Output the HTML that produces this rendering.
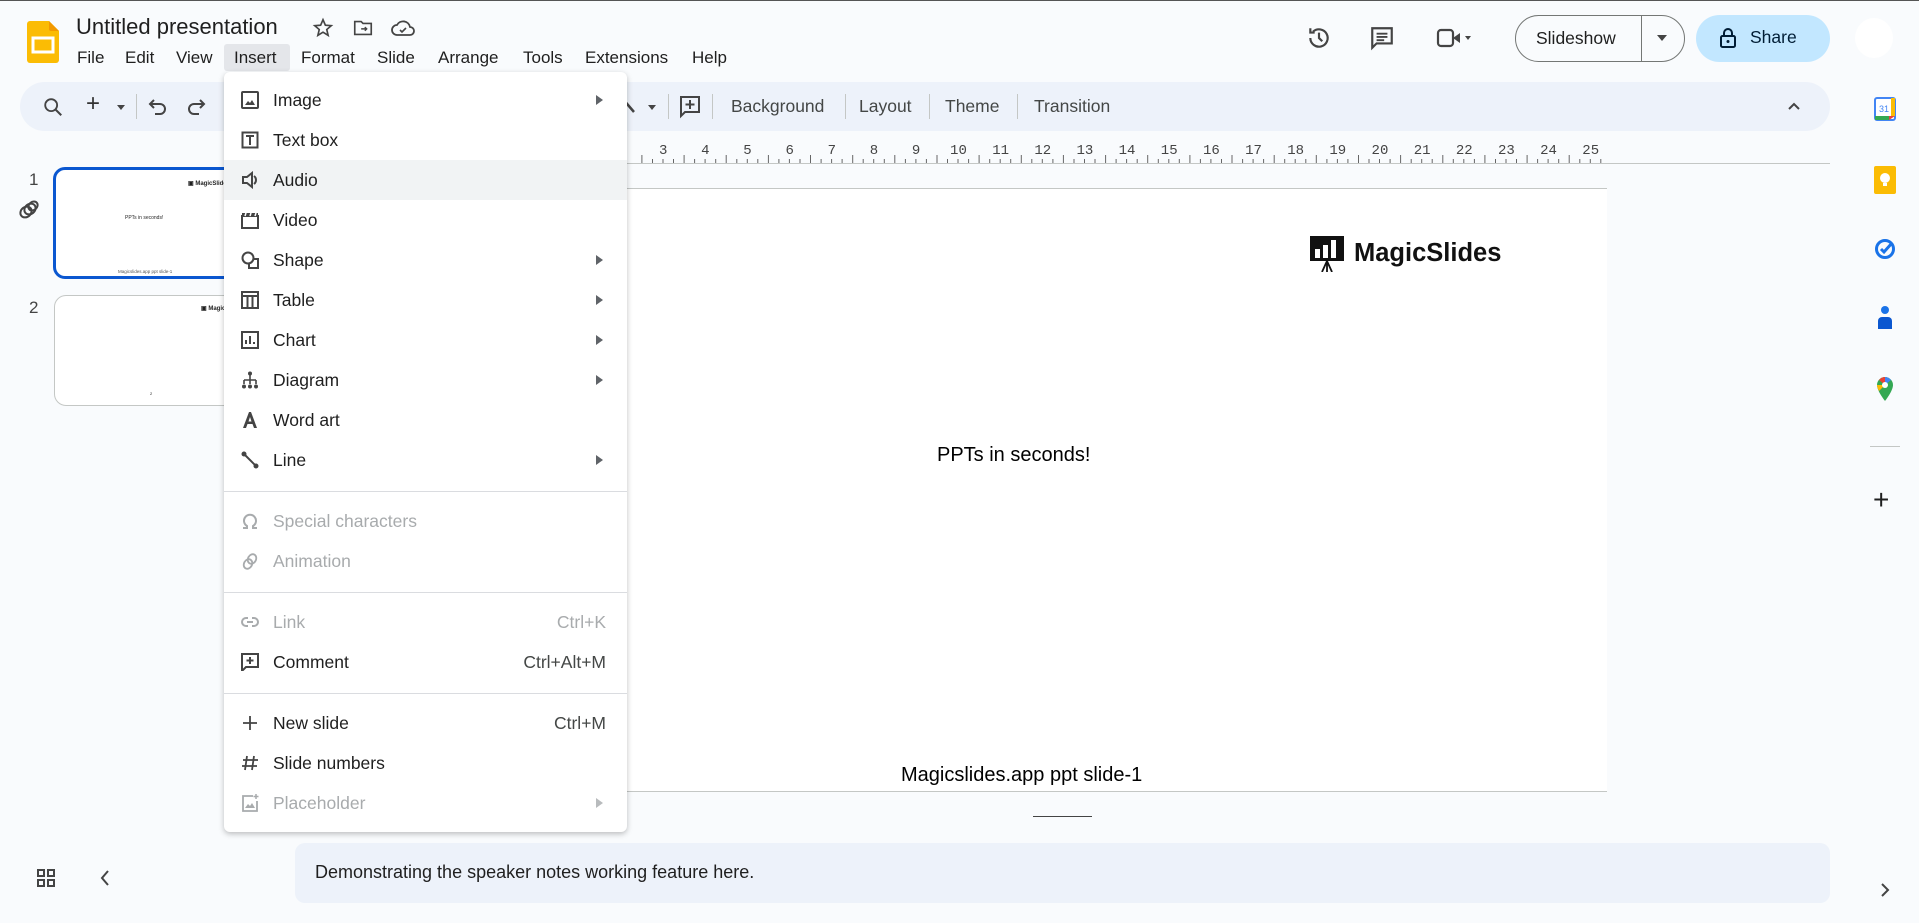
<!DOCTYPE html>
<html><head><meta charset="utf-8"><style>
*{box-sizing:border-box;margin:0;padding:0}
body{width:1919px;height:923px;background:#f9fbfd;font-family:"Liberation Sans",sans-serif;color:#1f1f1f;position:relative;overflow:hidden}
.a{position:absolute}
.menu span{position:absolute;font-size:17px;top:48px}
.tb{position:absolute;left:20px;top:82px;width:1810px;height:49px;background:#edf2fa;border-radius:25px}
.tt{position:absolute;top:14px;font-size:17.5px;color:#444746}
.sep{position:absolute;top:12px;width:1px;height:25px;background:#c4c7c5}
.dd{position:absolute;left:224px;top:72px;width:403px;height:760px;background:#fff;border-radius:6px;box-shadow:0 2px 6px rgba(0,0,0,.25);z-index:5}
.it{position:absolute;left:0;width:403px;height:40px;font-size:17.5px;line-height:40px}
.it .t{position:absolute;left:49px}
.it .ic{position:absolute;left:17px;top:11px;width:18px;height:18px}
.it .ar{position:absolute;left:372px;top:15px;width:0;height:0;border-left:7px solid #5f6368;border-top:5px solid transparent;border-bottom:5px solid transparent}
.it .sc{position:absolute;right:21px;color:#444746}
.dis{color:#a8abad}.dis .sc{color:#a8abad}.dis .ar{border-left-color:#b8bbbd}
.hr{position:absolute;left:0;width:403px;height:1px;background:#dadce0}
.rl{position:absolute;top:143px;font-size:14px;color:#444;font-family:"Liberation Mono",monospace}
</style></head><body>
<div class="a" style="left:0;top:0;width:1919px;height:1px;background:#555"></div>
<svg class="a" style="left:27px;top:21px" width="32" height="42" viewBox="0 0 32 42"><path d="M3 0h19l10 10v29a3 3 0 0 1-3 3H3a3 3 0 0 1-3-3V3a3 3 0 0 1 3-3z" fill="#fbbc04"/><path d="M22 0l10 10h-8a2 2 0 0 1-2-2z" fill="#f29900"/><rect x="6" y="17" width="20" height="14" fill="none" stroke="#fff" stroke-width="3"/></svg>
<div class="a" style="left:76px;top:14px;font-size:22px;color:#1f1f1f">Untitled presentation</div>
<svg class="a" style="left:312px;top:17px" width="22" height="22" viewBox="0 0 24 24"><path d="M12 3l2.6 6 6.4.5-4.9 4.2 1.5 6.3L12 16.6 6.4 20l1.5-6.3L3 9.5 9.4 9z" fill="none" stroke="#444" stroke-width="1.8"/></svg>
<svg class="a" style="left:352px;top:17px" width="22" height="22" viewBox="0 0 24 24"><path d="M3 5h7l2 2h9v12H3z" fill="none" stroke="#444" stroke-width="1.8"/><path d="M10 13h6m-2-2l2 2-2 2" fill="none" stroke="#444" stroke-width="1.6"/></svg>
<svg class="a" style="left:391px;top:17px" width="24" height="22" viewBox="0 0 24 22"><path d="M6 18a5 5 0 0 1 0-10 7 7 0 0 1 13 2 4 4 0 0 1 0 8z" fill="none" stroke="#444" stroke-width="1.8"/><path d="M9 13l2 2 4-4" fill="none" stroke="#444" stroke-width="1.6"/></svg>
<div class="menu">
<div class="a" style="left:224px;top:44px;width:66px;height:27px;background:#e4e6ea;border-radius:3px"></div>
<span style="left:77px">File</span><span style="left:125px">Edit</span><span style="left:176px">View</span><span style="left:234px">Insert</span><span style="left:301px">Format</span><span style="left:377px">Slide</span><span style="left:438px">Arrange</span><span style="left:523px">Tools</span><span style="left:585px">Extensions</span><span style="left:692px">Help</span>
</div>
<svg class="a" style="left:1306px;top:25px" width="26" height="26" viewBox="0 0 24 24"><path d="M4 12a8 8 0 1 0 2.5-5.8M4 3v4h4" fill="none" stroke="#444" stroke-width="2"/><path d="M12 7v5l3 3" fill="none" stroke="#444" stroke-width="2"/></svg>
<svg class="a" style="left:1369px;top:25px" width="26" height="26" viewBox="0 0 24 24"><path d="M3 3h18v14H7l-4 4z" fill="none" stroke="#444" stroke-width="2"/><path d="M7 8h10M7 11h10M7 14h7" stroke="#444" stroke-width="1.8"/></svg>
<svg class="a" style="left:1436px;top:26px" width="36" height="24" viewBox="0 0 36 24"><rect x="2" y="4" width="15" height="16" rx="3" fill="none" stroke="#444" stroke-width="2.2"/><path d="M17 12l7-5v10z" fill="#444"/><path d="M29 10h6l-3 4z" fill="#444"/></svg>
<div class="a" style="left:1515px;top:15px;width:170px;height:47px;border:1px solid #747775;border-radius:24px"></div>
<div class="a" style="left:1641px;top:15px;width:1px;height:47px;background:#747775"></div>
<div class="a" style="left:1536px;top:28px;font-size:17.5px;color:#1f1f1f">Slideshow</div>
<div class="a" style="left:1657px;top:35px;border-top:6px solid #444;border-left:5px solid transparent;border-right:5px solid transparent"></div>
<div class="a" style="left:1696px;top:15px;width:134px;height:47px;background:#c2e7ff;border-radius:24px"></div>
<svg class="a" style="left:1719px;top:27px" width="18" height="22" viewBox="0 0 18 22"><rect x="2" y="9" width="14" height="11" rx="1.5" fill="none" stroke="#001d35" stroke-width="2"/><path d="M5 9V6a4 4 0 0 1 8 0v3" fill="none" stroke="#001d35" stroke-width="2"/><circle cx="9" cy="14.5" r="1.5" fill="#001d35"/></svg>
<div class="a" style="left:1750px;top:27px;font-size:17.5px;color:#001d35">Share</div>
<div class="a" style="left:1855px;top:18px;width:38px;height:40px;border-radius:50%;background:#fff"></div>
<svg class="a" style="left:1874px;top:97px" width="22" height="24" viewBox="0 0 22 24"><rect x="1" y="1" width="20" height="22" rx="2" fill="#fff" stroke="#4285f4" stroke-width="2"/><rect x="1" y="19" width="14" height="4" fill="#34a853"/><rect x="17" y="1" width="4" height="18" fill="#fbbc04"/><path d="M15 19h6l-6 4z" fill="#ea4335"/><text x="5" y="15" font-size="9" fill="#4285f4" font-family="Liberation Sans">31</text></svg>
<svg class="a" style="left:1874px;top:166px" width="22" height="28" viewBox="0 0 22 28"><rect width="22" height="28" rx="2" fill="#fbbc04"/><circle cx="11" cy="12" r="5" fill="#fff"/><rect x="9" y="17" width="4" height="3" fill="#fff"/></svg>
<svg class="a" style="left:1874px;top:236px" width="22" height="24" viewBox="0 0 22 24"><circle cx="11" cy="13" r="8.5" fill="none" stroke="#1a73e8" stroke-width="3"/><path d="M7 13l3 3 8-9" fill="none" stroke="#1a73e8" stroke-width="3"/></svg>
<svg class="a" style="left:1877px;top:305px" width="16" height="26" viewBox="0 0 16 26"><circle cx="8" cy="5" r="4" fill="#1a73e8"/><path d="M1 24v-8a4 4 0 0 1 4-4h6a4 4 0 0 1 4 4v8z" fill="#0b57d0"/></svg>
<svg class="a" style="left:1876px;top:376px" width="18" height="26" viewBox="0 0 18 26"><path d="M9 1a8 8 0 0 0-8 8c0 6 8 16 8 16s8-10 8-16a8 8 0 0 0-8-8z" fill="#34a853"/><path d="M9 1a8 8 0 0 0-6 3l6 5z" fill="#ea4335"/><path d="M15 4l-6 5v-8a8 8 0 0 1 6 3z" fill="#4285f4"/><path d="M1 9c0 2 1 4 2 6l6-6z" fill="#fbbc04"/><circle cx="9" cy="9" r="3" fill="#fff"/></svg>
<div class="a" style="left:1870px;top:446px;width:30px;height:1px;background:#c4c7c5"></div>
<div class="a" style="left:1873px;top:484px;font-size:28px;color:#1f1f1f">+</div>
<svg class="a" style="left:1878px;top:882px" width="14" height="16" viewBox="0 0 14 16"><path d="M4 2l6 6-6 6" fill="none" stroke="#444" stroke-width="2"/></svg>
<div class="tb">
<svg class="a" style="left:22px;top:14px" width="22" height="22" viewBox="0 0 24 24"><circle cx="10" cy="10" r="6.5" fill="none" stroke="#444" stroke-width="2"/><path d="M15 15l6 6" stroke="#444" stroke-width="2.2"/></svg>
<div class="tt" style="left:66px;top:8px;font-size:24px;color:#333">+</div>
<div class="a" style="left:97px;top:23px;border-top:5px solid #444;border-left:4px solid transparent;border-right:4px solid transparent"></div>
<div class="sep" style="left:116px"></div>
<svg class="a" style="left:128px;top:14px" width="20" height="22" viewBox="0 0 20 22"><path d="M6 4L2 8l4 4M2 8h10a5 5 0 0 1 0 10H7" fill="none" stroke="#444" stroke-width="2"/></svg>
<svg class="a" style="left:166px;top:14px" width="20" height="22" viewBox="0 0 20 22"><path d="M14 4l4 4-4 4M18 8H8a5 5 0 0 0 0 10h5" fill="none" stroke="#444" stroke-width="2"/></svg>
<svg class="a" style="left:600px;top:14px" width="18" height="20" viewBox="0 0 18 20"><path d="M2 2l12 14" stroke="#444" stroke-width="2.5"/></svg>
<div class="a" style="left:628px;top:23px;border-top:5px solid #444;border-left:4px solid transparent;border-right:4px solid transparent"></div>
<div class="sep" style="left:648px"></div>
<svg class="a" style="left:658px;top:12px" width="24" height="26" viewBox="0 0 24 26"><path d="M3 3h18v15H7l-4 4z" fill="none" stroke="#444" stroke-width="2"/><path d="M12 6v9M7.5 10.5h9" stroke="#444" stroke-width="2"/></svg>
<div class="sep" style="left:692px"></div>
<div class="tt" style="left:711px">Background</div>
<div class="sep" style="left:825px"></div>
<div class="tt" style="left:839px">Layout</div>
<div class="sep" style="left:909px"></div>
<div class="tt" style="left:925px">Theme</div>
<div class="sep" style="left:997px"></div>
<div class="tt" style="left:1014px">Transition</div>
<svg class="a" style="left:1767px;top:18px" width="14" height="12" viewBox="0 0 14 12"><path d="M2 9l5-5 5 5" fill="none" stroke="#444" stroke-width="2"/></svg>
</div>
<div class="a" style="left:627px;top:163px;width:1203px;height:1px;background:#c4c7c5"></div>
<div id="ruler"></div>
<div class="a" style="left:29px;top:170px;font-size:17px;color:#444">1</div>
<svg class="a" style="left:17px;top:198px" width="24" height="24" viewBox="0 0 24 24"><g fill="none" stroke="#444" stroke-width="2"><ellipse cx="9" cy="14" rx="6" ry="5" transform="rotate(-40 9 14)"/><ellipse cx="13" cy="11" rx="6" ry="5" transform="rotate(-40 13 11)"/><ellipse cx="16" cy="8" rx="5" ry="4" transform="rotate(-40 16 8)"/></g></svg>
<div class="a" style="left:53px;top:167px;width:200px;height:112px;border:3px solid #0b57d0;border-radius:12px;background:#fff"></div>
<div class="a" style="left:188px;top:180px;font-size:6px;font-weight:bold">▣ MagicSlides</div>
<div class="a" style="left:125px;top:215px;font-size:5px">PPTs in seconds!</div>
<div class="a" style="left:118px;top:269px;font-size:4.5px;color:#555">Magicslides.app ppt slide-1</div>
<div class="a" style="left:29px;top:298px;font-size:17px;color:#444">2</div>
<div class="a" style="left:54px;top:295px;width:200px;height:111px;border:1px solid #c4c7c5;border-radius:12px;background:#fff"></div>
<div class="a" style="left:201px;top:305px;font-size:6px;font-weight:bold">▣ Magic</div>
<div class="a" style="left:150px;top:391px;font-size:4px">2</div>
<div class="a" style="left:295px;top:188px;width:1312px;height:604px;background:#fff;border-top:1px solid #c4c7c5;border-bottom:1px solid #c4c7c5"></div>
<svg class="a" style="left:1310px;top:236px" width="34" height="36" viewBox="0 0 34 36"><rect x="0" y="0" width="34" height="25" fill="#111"/><rect x="5" y="13" width="5" height="9" fill="#fff"/><rect x="13" y="9" width="5" height="13" fill="#fff"/><rect x="21" y="4" width="5" height="18" fill="#fff"/><path d="M17 25l-5 11M17 25v11M17 25l5 11" stroke="#111" stroke-width="1.8"/></svg>
<div class="a" style="left:1354px;top:239px;font-size:25.5px;font-weight:bold;color:#111">MagicSlides</div>
<div class="a" style="left:937px;top:444px;font-size:20px;color:#000">PPTs in seconds!</div>
<div class="a" style="left:901px;top:764px;font-size:20px;color:#000">Magicslides.app ppt slide-1</div>
<div class="a" style="left:1033px;top:816px;width:59px;height:1px;background:#444"></div>
<div class="a" style="left:295px;top:843px;width:1535px;height:60px;background:#edf2fa;border-radius:10px"></div>
<div class="a" style="left:315px;top:862px;font-size:18px;color:#1f1f1f">Demonstrating the speaker notes working feature here.</div>
<svg class="a" style="left:36px;top:868px" width="20" height="20" viewBox="0 0 20 20"><g fill="none" stroke="#444" stroke-width="2"><rect x="2" y="2" width="6" height="6"/><rect x="12" y="2" width="6" height="6"/><rect x="2" y="12" width="6" height="6"/><rect x="12" y="12" width="6" height="6"/></g></svg>
<svg class="a" style="left:99px;top:869px" width="12" height="18" viewBox="0 0 12 18"><path d="M9 2L3 9l6 7" fill="none" stroke="#444" stroke-width="2"/></svg>
<div class="dd">
<div class="it" style="top:8px"><svg class="ic" viewBox="0 0 18 18"><rect x="1" y="1" width="16" height="16" rx="1" fill="none" stroke="#444" stroke-width="2"/><path d="M4 14l3-4 2 2 2-3 3 5z" fill="#444"/></svg><span class="t">Image</span><i class="ar"></i></div>
<div class="it" style="top:48px"><svg class="ic" viewBox="0 0 18 18"><rect x="1.5" y="1.5" width="15" height="15" fill="none" stroke="#444" stroke-width="2"/><path d="M5 5h8M9 5v9" stroke="#444" stroke-width="2"/></svg><span class="t">Text box</span></div>
<div class="it" style="top:88px;background:#f1f3f4"><svg class="ic" viewBox="0 0 18 18"><path d="M2 6h4l5-4v14l-5-4H2z" fill="none" stroke="#444" stroke-width="2"/><path d="M13 5a5 5 0 0 1 0 8" fill="none" stroke="#444" stroke-width="2"/></svg><span class="t">Audio</span></div>
<div class="it" style="top:128px"><svg class="ic" viewBox="0 0 18 18"><rect x="1" y="5" width="16" height="12" fill="none" stroke="#444" stroke-width="2"/><path d="M1 2h16v3H1z" fill="#444"/><path d="M5 2l-1 3M10 2l-1 3M15 2l-1 3" stroke="#fff" stroke-width="1.5"/></svg><span class="t">Video</span></div>
<div class="it" style="top:168px"><svg class="ic" viewBox="0 0 18 18"><circle cx="7" cy="7" r="5.5" fill="none" stroke="#444" stroke-width="2"/><path d="M12 8h5v9H8v-4" fill="none" stroke="#444" stroke-width="2"/></svg><span class="t">Shape</span><i class="ar"></i></div>
<div class="it" style="top:208px"><svg class="ic" viewBox="0 0 18 18"><rect x="1" y="1" width="16" height="16" fill="none" stroke="#444" stroke-width="2"/><path d="M1 5h16M6.5 5v12M11.5 5v12" stroke="#444" stroke-width="2"/></svg><span class="t">Table</span><i class="ar"></i></div>
<div class="it" style="top:248px"><svg class="ic" viewBox="0 0 18 18"><rect x="1" y="1" width="16" height="16" fill="none" stroke="#444" stroke-width="2"/><path d="M5 13V9M9 13V5M13 13v-2" stroke="#444" stroke-width="2"/></svg><span class="t">Chart</span><i class="ar"></i></div>
<div class="it" style="top:288px"><svg class="ic" viewBox="0 0 18 18"><circle cx="9" cy="2.5" r="2" fill="#444"/><path d="M9 4v5M3 9h12M3 9v4M9 9v4M15 9v4" stroke="#444" stroke-width="1.6"/><circle cx="3" cy="15.5" r="2" fill="#444"/><circle cx="9" cy="15.5" r="2" fill="#444"/><circle cx="15" cy="15.5" r="2" fill="#444"/></svg><span class="t">Diagram</span><i class="ar"></i></div>
<div class="it" style="top:328px"><svg class="ic" viewBox="0 0 18 18"><path d="M2 17L8 1h2l6 16h-3l-1.5-4h-5L5 17z" fill="#444"/><path d="M7.5 10.5h3L9 6z" fill="#fff"/></svg><span class="t">Word art</span></div>
<div class="it" style="top:368px"><svg class="ic" viewBox="0 0 18 18"><path d="M3 3l12 12" stroke="#444" stroke-width="2"/><circle cx="3" cy="3" r="2.5" fill="#444"/><circle cx="15" cy="15" r="2.5" fill="#444"/></svg><span class="t">Line</span><i class="ar"></i></div>
<div class="hr" style="top:419px"></div>
<div class="it dis" style="top:429px"><svg class="ic" viewBox="0 0 18 18"><path d="M2 16h4v-2a6 6 0 1 1 6 0v2h4" fill="none" stroke="#a8abad" stroke-width="2"/></svg><span class="t">Special characters</span></div>
<div class="it dis" style="top:469px"><svg class="ic" viewBox="0 0 18 18"><g fill="none" stroke="#a8abad" stroke-width="1.8"><ellipse cx="7" cy="12" rx="4" ry="5" transform="rotate(30 7 12)"/><ellipse cx="11" cy="7" rx="4" ry="5" transform="rotate(30 11 7)"/></g></svg><span class="t">Animation</span></div>
<div class="hr" style="top:520px"></div>
<div class="it dis" style="top:530px"><svg class="ic" viewBox="0 0 18 18"><path d="M7 5H5a4 4 0 0 0 0 8h2M11 5h2a4 4 0 0 1 0 8h-2M6 9h6" fill="none" stroke="#a8abad" stroke-width="2"/></svg><span class="t">Link</span><span class="sc">Ctrl+K</span></div>
<div class="it" style="top:570px"><svg class="ic" viewBox="0 0 18 18"><path d="M1 1h16v13H5l-4 4z" fill="none" stroke="#444" stroke-width="2"/><path d="M9 4v7M5.5 7.5h7" stroke="#444" stroke-width="2"/></svg><span class="t">Comment</span><span class="sc">Ctrl+Alt+M</span></div>
<div class="hr" style="top:621px"></div>
<div class="it" style="top:631px"><svg class="ic" viewBox="0 0 18 18"><path d="M9 2v14M2 9h14" stroke="#444" stroke-width="1.8"/></svg><span class="t">New slide</span><span class="sc">Ctrl+M</span></div>
<div class="it" style="top:671px"><svg class="ic" viewBox="0 0 18 18"><path d="M6 2L4 16M13 2l-2 14M2 6h15M1 12h15" stroke="#444" stroke-width="1.8"/></svg><span class="t">Slide numbers</span></div>
<div class="it dis" style="top:711px"><svg class="ic" viewBox="0 0 18 18"><path d="M12 2H2v15h14V7" fill="none" stroke="#a8abad" stroke-width="1.8"/><path d="M4 14l3-4 2 2 2-3 3 5z" fill="#a8abad"/><path d="M15 0v5M12.5 2.5h5" stroke="#a8abad" stroke-width="1.5"/></svg><span class="t">Placeholder</span><i class="ar"></i></div>
</div>
<script>
var r=document.getElementById('ruler'),h='';
for(var n=3;n<=25;n++){var x=663+(n-3)*42.15;h+='<div class="rl" style="left:'+(x-(n>9?8:4))+'px">'+n+'</div>';}
var s='<svg class="a" style="left:627px;top:148px" width="985" height="16"><g stroke="#666" stroke-width="1">';
var q=42.15/4;
for(var i=0;i<100;i++){var x=(663-627-42.15+21.07)+i*q;if(x<0)continue;if(x>980)break;var t=i%4==0?8:4;s+='<line x1="'+x.toFixed(1)+'" x2="'+x.toFixed(1)+'" y1="15" y2="'+(15-t)+'"/>';}
s+='</g></svg>';r.innerHTML=h+s;
</script>
</body></html>
